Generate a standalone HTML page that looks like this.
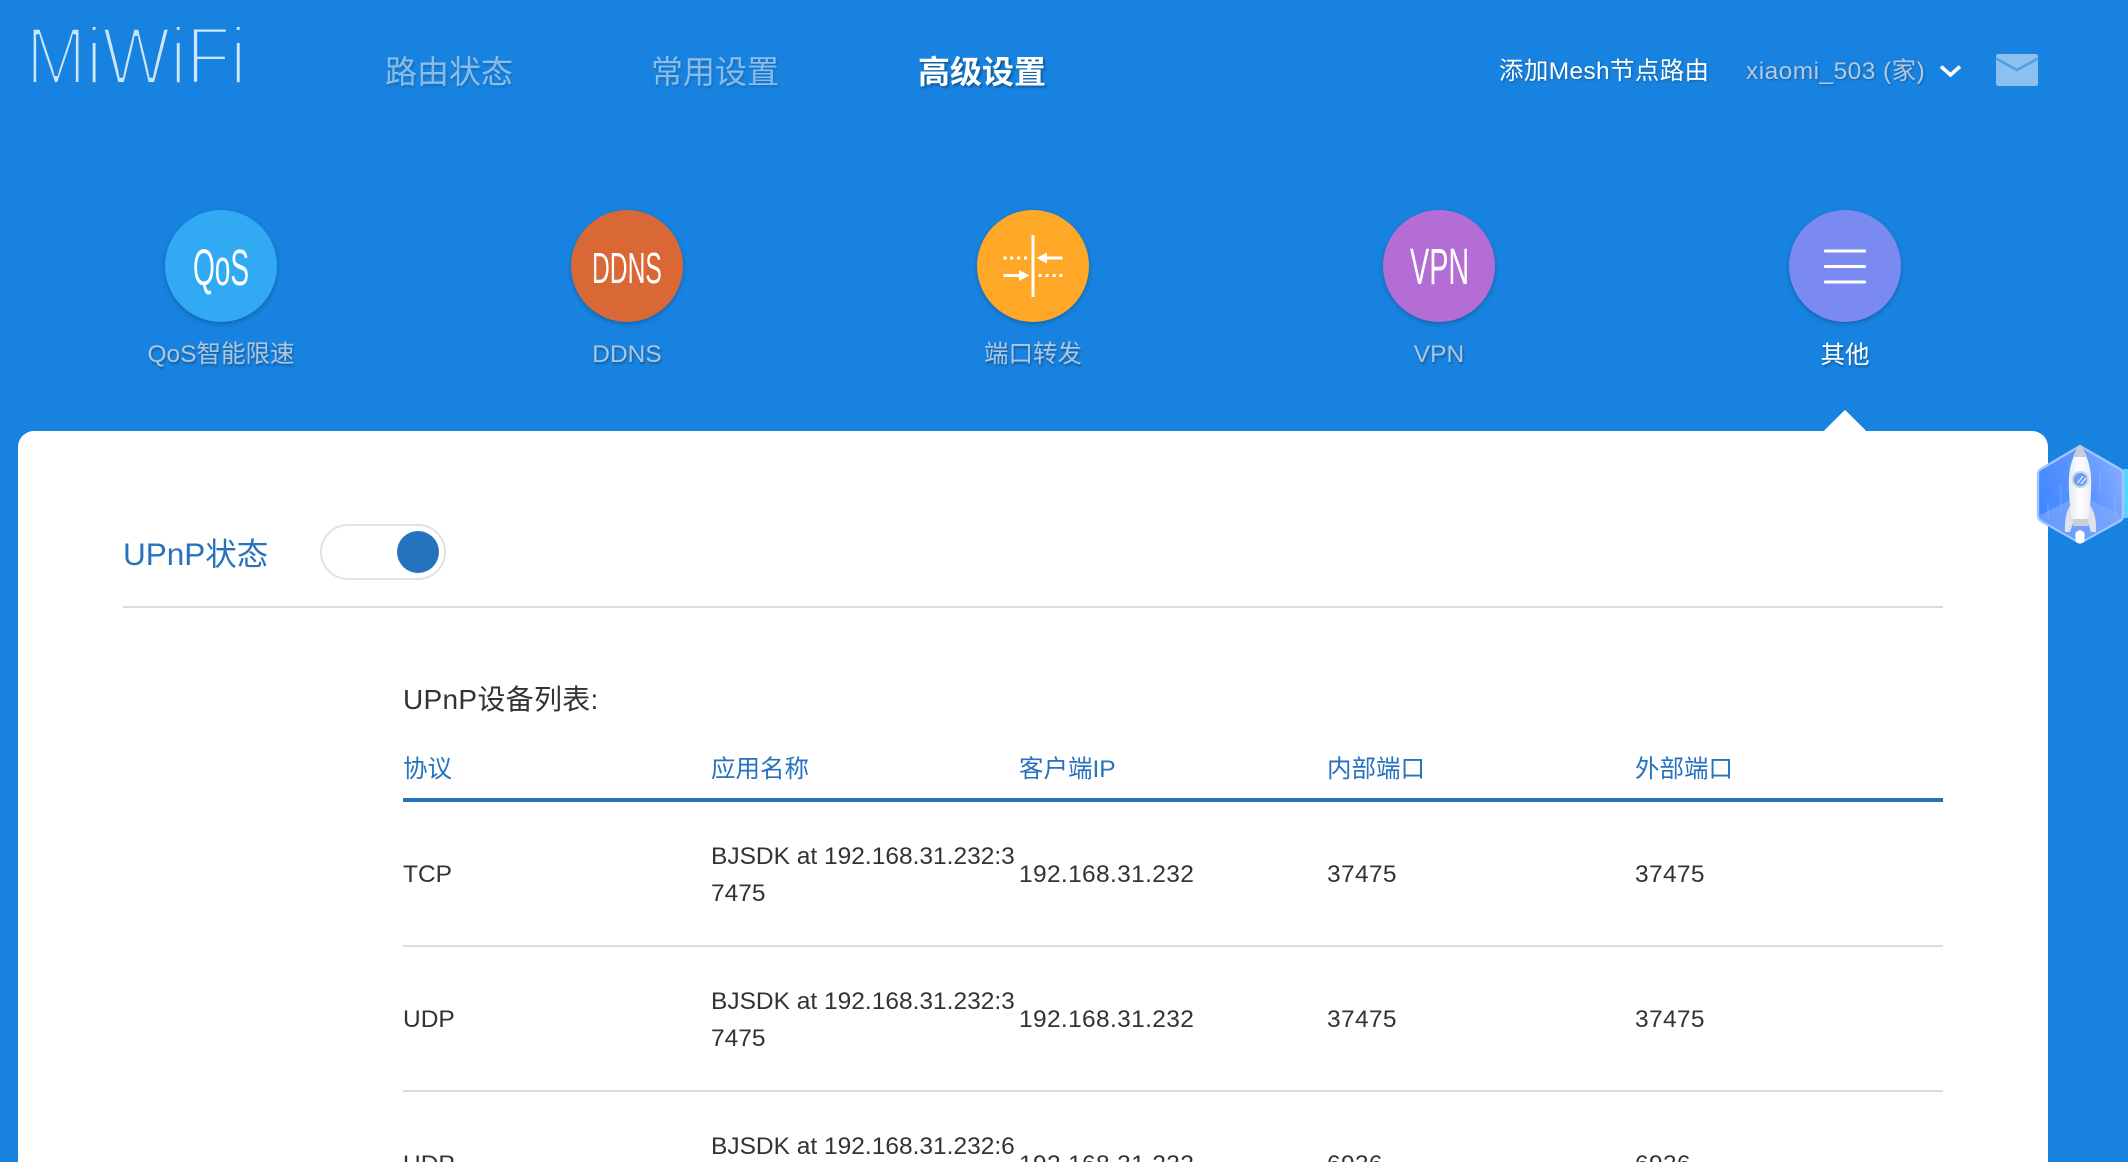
<!DOCTYPE html>
<html lang="zh-CN">
<head>
<meta charset="utf-8">
<title>MiWiFi</title>
<style>
html,body{margin:0;padding:0;width:2128px;height:1162px;overflow:hidden;background:#1782df;font-family:"Liberation Sans","Noto Sans CJK SC",sans-serif;}
#p{position:absolute;left:0;top:0;width:2128px;height:1162px;overflow:hidden;background:#1782df;}
.a{position:absolute;white-space:nowrap;}
.nav{font-size:32px;line-height:40px;top:52px;color:rgba(255,255,255,.5);text-shadow:1px 2px 2px rgba(0,0,0,.15);}
.nav.on{color:#fff;font-weight:bold;text-shadow:2px 2px 2px rgba(0,0,0,.3);}
.c{position:absolute;top:210px;width:112px;height:112px;border-radius:50%;box-shadow:0 2px 4px rgba(0,0,0,.22);}
.l{position:absolute;top:338px;width:300px;text-align:center;font-size:24.5px;line-height:34px;color:#adc6e2;text-shadow:1px 2px 2px rgba(0,0,0,.3);white-space:nowrap;}
.l.on{color:#fff;top:339px;}
#card{position:absolute;left:18px;top:431px;width:2030px;height:731px;background:#fff;border-radius:16px 16px 0 0;}
#tip{position:absolute;left:1830px;top:416px;width:30px;height:30px;background:#fff;transform:rotate(45deg);border-radius:1px;}
#tw{position:absolute;left:403px;top:740px;width:1540px;height:422px;overflow:hidden;}
table{width:1540px;table-layout:fixed;border-collapse:separate;border-spacing:0;font-size:24.5px;line-height:37px;color:#333;}
th{height:58px;padding:0;text-align:left;font-weight:normal;color:#2672bf;border-bottom:4px solid #2672bf;vertical-align:middle;}
td{height:141px;padding:2px 0 0;border-bottom:2px solid #dcdcdc;white-space:nowrap;vertical-align:middle;}
td.n{letter-spacing:.35px;}
</style>
</head>
<body>
<div id="p">
<svg class="a" style="left:0;top:0" width="300" height="110" viewBox="0 0 300 110">
  <text transform="translate(26,84) scale(.88,1)" font-family="Liberation Sans" font-size="82" fill="#cfe5fa" stroke="#1782df" stroke-width="3.9">MiWiFi</text>
</svg>
<div class="a nav" style="left:385px">路由状态</div>
<div class="a nav" style="left:651px">常用设置</div>
<div class="a nav on" style="left:918px">高级设置</div>

<div class="a" style="left:1499px;top:55px;font-size:24.5px;line-height:34px;color:#fff;letter-spacing:.35px;text-shadow:1px 1px 2px rgba(0,0,0,.25)">添加Mesh节点路由</div>
<div class="a" style="left:1746px;top:55px;font-size:24.5px;line-height:34px;color:#b4c8e4;letter-spacing:.45px;text-shadow:1px 1px 2px rgba(0,0,0,.25)">xiaomi_503 (家)</div>
<svg class="a" style="left:1930px;top:45px" width="120" height="50" viewBox="0 0 120 50">
  <path d="M11 21.5 L20.5 30 L30 21.5" fill="none" stroke="#fff" stroke-width="3.6"/>
  <rect x="66" y="9" width="42" height="32" rx="2.5" fill="#8cc0f0"/>
  <path d="M66 13.5 L87 25 L108 13.5" fill="none" stroke="#4e9fe8" stroke-width="2.6"/>
</svg>

<div class="c" style="left:165px;background:#31a9f3"></div>
<div class="c" style="left:571px;background:#d96836"></div>
<div class="c" style="left:977px;background:#ffa726"></div>
<div class="c" style="left:1383px;background:#b56dd6"></div>
<div class="c" style="left:1789px;background:#7a8af0"></div>

<svg class="a" style="left:0;top:200px" width="2128" height="130" viewBox="0 200 2128 130">
  <text transform="translate(193,285) scale(.55,1)" font-family="Liberation Sans" font-size="51" fill="#fff">QoS</text>
  <text transform="translate(592,283) scale(.56,1)" font-family="Liberation Sans" font-size="44" fill="#fff">DDNS</text>
  <text transform="translate(1410,284) scale(.565,1)" font-family="Liberation Sans" font-size="51" fill="#fff">VPN</text>
  <g fill="#fff">
    <rect x="1031.5" y="235" width="3" height="62"/>
    <rect x="1043" y="256.5" width="19.5" height="3"/>
    <path d="M1036.5 258 L1047 252.5 L1047 263.5 Z"/>
    <rect x="1003.5" y="274" width="18" height="3"/>
    <path d="M1029.5 275.5 L1019 270 L1019 281 Z"/>
    <rect x="1003.5" y="256.5" width="3.2" height="3"/><rect x="1010" y="256.5" width="3.2" height="3"/><rect x="1017" y="256.5" width="3.2" height="3"/><rect x="1024" y="256.5" width="3.2" height="3"/>
    <rect x="1038.5" y="274" width="3.2" height="3"/><rect x="1045.5" y="274" width="3.2" height="3"/><rect x="1052.5" y="274" width="3.2" height="3"/><rect x="1059.3" y="274" width="3.2" height="3"/>
    <rect x="1824" y="249.5" width="42" height="3" rx="1"/>
    <rect x="1824" y="265" width="42" height="3" rx="1"/>
    <rect x="1824" y="280.5" width="42" height="3" rx="1"/>
  </g>
</svg>

<div class="l" style="left:71px">QoS智能限速</div>
<div class="l" style="left:477px">DDNS</div>
<div class="l" style="left:883px">端口转发</div>
<div class="l" style="left:1289px">VPN</div>
<div class="l on" style="left:1695px">其他</div>

<div id="tip"></div>
<div id="card"></div>

<div class="a" style="left:123px;top:532px;font-size:31.5px;line-height:44px;color:#2672bf">UPnP状态</div>
<div class="a" style="left:320px;top:524px;width:122px;height:52px;border:2px solid #e2e2e2;border-radius:28px;background:#fff"></div>
<div class="a" style="left:397px;top:531px;width:42px;height:42px;border-radius:50%;background:#2672bf"></div>
<div class="a" style="left:123px;top:606px;width:1820px;height:2px;background:#dcdcdc"></div>

<div class="a" style="left:403px;top:680px;font-size:28px;line-height:40px;color:#333;letter-spacing:.3px">UPnP设备列表:</div>

<div id="tw">
<table>
  <colgroup><col style="width:20%"><col style="width:20%"><col style="width:20%"><col style="width:20%"><col style="width:20%"></colgroup>
  <tr><th>协议</th><th>应用名称</th><th>客户端IP</th><th>内部端口</th><th>外部端口</th></tr>
  <tr><td>TCP</td><td>BJSDK at 192.168.31.232:3<br>7475</td><td class="n">192.168.31.232</td><td class="n">37475</td><td class="n">37475</td></tr>
  <tr><td>UDP</td><td>BJSDK at 192.168.31.232:3<br>7475</td><td class="n">192.168.31.232</td><td class="n">37475</td><td class="n">37475</td></tr>
  <tr><td>UDP</td><td>BJSDK at 192.168.31.232:6<br>936</td><td class="n">192.168.31.232</td><td class="n">6936</td><td class="n">6936</td></tr>
</table>
</div>

<svg class="a" style="left:2028px;top:440px" width="100" height="108" viewBox="0 0 100 108">
  <defs>
    <linearGradient id="hx" x1="0" y1=".55" x2="1" y2=".1">
      <stop offset="0" stop-color="#4288ff"/><stop offset=".55" stop-color="#5e96ff"/><stop offset="1" stop-color="#8ab0ff"/>
    </linearGradient>
    <linearGradient id="bd" x1="0" y1="0" x2="1" y2="0">
      <stop offset="0" stop-color="#e4e9f3"/><stop offset=".5" stop-color="#fff"/><stop offset="1" stop-color="#e8ecf5"/>
    </linearGradient>
  </defs>
  <rect x="95" y="29" width="5" height="49" fill="#55d5fb"/>
  <path d="M52 6 L92 29 Q95 31 95 34 L95 76 Q95 79 92 81 L52 103 L13 81 Q10 79 10 76 L10 34 Q10 31 13 29 Z" fill="url(#hx)" stroke="#a3c4ff" stroke-width="2.4" stroke-linejoin="round"/>
  <path d="M12 75 L52 55 L93 75 L93 79 L52 101 L12 79 Z" fill="#82acff" opacity=".6"/>
  <path d="M20 62 V79 M33 45 V70 M87 55 V76 M72 30 V50" stroke="#bcd4ff" stroke-width=".7" opacity=".45"/>
  <path d="M44 63 Q36 72 37 92 L42 92 L46 80 Z" fill="#dde2eb"/>
  <path d="M60 63 Q69 72 68 92 L63 92 L59 80 Z" fill="#dde2eb"/>
  <path d="M52 5 Q62 20 63 36 Q64 56 60 80 L44 80 Q40 56 41 36 Q42 20 52 5 Z" fill="url(#bd)"/>
  <path d="M52 5 Q57 11 59 17 L45 17 Q47 11 52 5 Z" fill="#c8ced9"/>
  <circle cx="52.3" cy="39.5" r="8.5" fill="#c4d4ee"/>
  <circle cx="52.3" cy="39.5" r="6.5" fill="#6b9cf6"/>
  <path d="M49.5 43 L55 36 M53 44 L58 38" stroke="#e8f0ff" stroke-width="1.3"/>
  <rect x="45" y="79" width="15" height="7" fill="#c9ced8"/>
  <circle cx="52" cy="95" r="4.8" fill="#fff"/>
  <rect x="47.5" y="94" width="9" height="9" rx="2.5" fill="#fff"/>
</svg>
</div>
</body>
</html>
